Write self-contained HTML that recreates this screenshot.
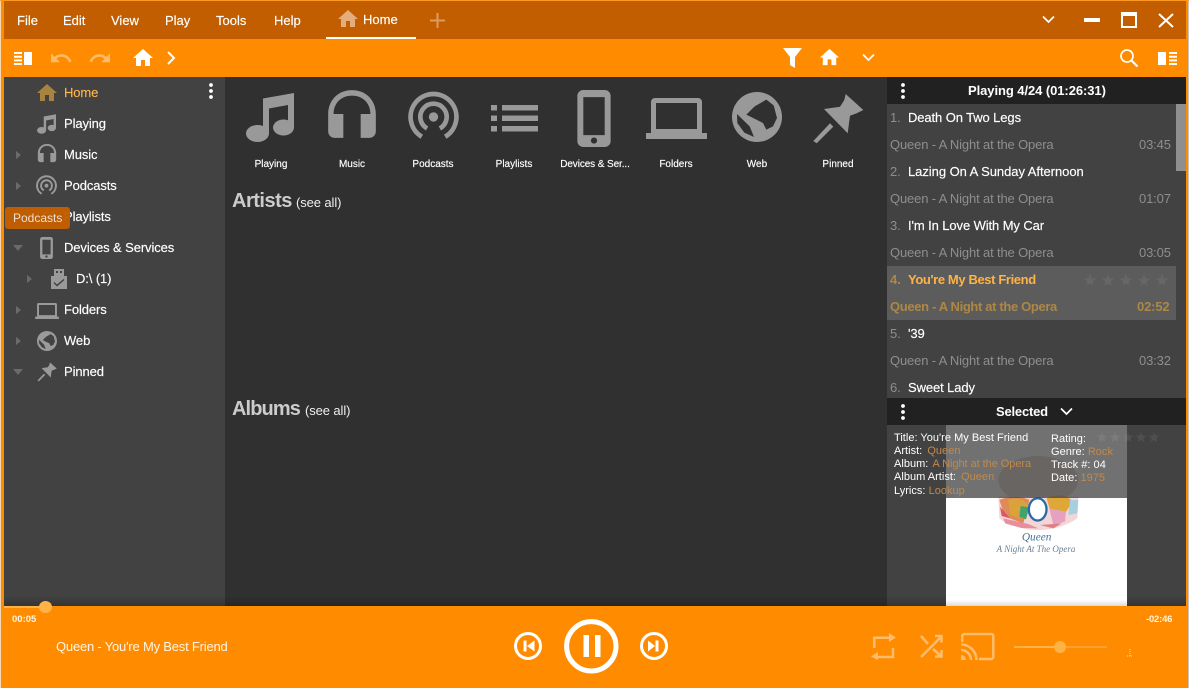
<!DOCTYPE html>
<html><head><meta charset="utf-8"><style>
html,body{margin:0;padding:0;width:1189px;height:688px;overflow:hidden;background:#ff8c00}
body{position:relative;font-family:"Liberation Sans",Arial,sans-serif;color:#fff}
.a{position:absolute}
.t{position:absolute;white-space:nowrap;line-height:16px}
.m{font-size:13px;top:13px;color:#fff;-webkit-text-stroke:.15px #fff}
.n{font-size:13px;color:#fff;letter-spacing:-.1px;-webkit-text-stroke:.15px currentColor}
.c{font-size:10px;color:#fff;text-align:center;width:76px;top:157px;-webkit-text-stroke:.15px #fff}
.q{font-size:13px;color:#fff;letter-spacing:-.1px;-webkit-text-stroke:.15px currentColor}
.g{font-size:13px;color:#8e8e8e;letter-spacing:-.15px}
.s{font-size:11px;color:#fff;line-height:13px;letter-spacing:.02px}
.s i{font-style:normal;color:#c08a4c;margin-left:2px}
.s i.z{margin-left:0}
svg{position:absolute;overflow:visible}
</style></head><body>
<svg width="0" height="0" style="position:absolute"><defs>
<symbol id="home" viewBox="0 0 24 24"><path d="M10 20v-6h4v6h5v-8h3L12 3 2 12h3v8z"/></symbol>
<symbol id="note" viewBox="0 0 48 49"><path d="M17 5.500L48 0V34H42V12L23 15.500V41H17z"/><ellipse cx="37.500" cy="34.500" rx="10.500" ry="8"/><ellipse cx="11.500" cy="40.500" rx="11.500" ry="8.500"/></symbol>
<symbol id="head" viewBox="0 0 24 24"><path d="M12 1C5.300 1 1 6 1 12v8c0 1.700 1.300 3 3 3h4V12H3.500C3.500 7 7 3.500 12 3.500S20.500 7 20.500 12H16v11h4c1.700 0 3-1.300 3-3v-8C23 6 18.700 1 12 1z"/></symbol>
<symbol id="pod" viewBox="0 -1.200 24 24"><circle cx="12" cy="11" r="2.200"/><path d="M6.500 20.300A10.800 10.800 0 1 1 17.500 20.300M9 16.400A6.200 6.200 0 1 1 15 16.400" fill="none" stroke="currentColor" stroke-width="2.200"/></symbol>
<symbol id="list" viewBox="0 0 47 27"><path d="M0 0h6v5.500H0zM11 0h36v5.500H11zM0 10.500h6V16H0zM11 10.500h36V16H11zM0 21h6v5.500H0zM11 21h36v5.500H11z"/></symbol>
<symbol id="phone" viewBox="0 0 14 24"><path fill-rule="evenodd" d="M2.500 0h9A2.500 2.500 0 0 1 14 2.500v19a2.500 2.500 0 0 1-2.500 2.500h-9A2.500 2.500 0 0 1 0 21.500v-19A2.500 2.500 0 0 1 2.500 0zM2.500 3v16h9V3zM7 20a1.300 1.300 0 1 0 0 2.600 1.300 1.300 0 0 0 0-2.600z"/></symbol>
<symbol id="lap" viewBox="0 0 61 41"><path fill-rule="evenodd" d="M9 0h43a4 4 0 0 1 4 4v31h5v6H0v-6h5V4a4 4 0 0 1 4-4zM10 5v26h41V5z"/></symbol>
<symbol id="web" viewBox="0 0 150 150"><path fill-rule="evenodd" d="M75 0a75 75 0 1 0 0 150a75 75 0 1 0 0-150zM103 23L68 43L43 68L73 83L93 93L103 113L123 103L135 78L125 40zM15 66L53 103L66 135L37 122L16 93z"/></symbol>
<symbol id="pin" viewBox="0 0 52 52"><path d="M33.700 1L51.300 17L44.700 20.300L38 22.700L35.700 40.300L12 16L28 13.700L32.300 7zM18 30.300L21.300 33.700L4.700 50.300L1.300 48z"/></symbol>
<symbol id="usb" viewBox="0 0 16 20"><path fill-rule="evenodd" d="M3 0h10v7h3v13H0V7h3zM5 2v2h2V2zM9 2v2h2V2zM3.500 13l-1 1 3.500 3.500L13.500 11l-1-1L6 15.500z"/></symbol>
<symbol id="star" viewBox="0 0 24 24"><path d="M12 2l3 7 7.500.6-5.700 5 1.700 7.400L12 18l-6.500 4 1.700-7.400-5.700-5L9 9z"/></symbol>
<symbol id="dots" viewBox="0 0 4 16"><circle cx="2" cy="2" r="1.900"/><circle cx="2" cy="8" r="1.900"/><circle cx="2" cy="14" r="1.900"/></symbol>
<symbol id="tri" viewBox="0 0 6 10"><path d="M0 0l6 5-6 5z"/></symbol>
<symbol id="undo" viewBox="2 7 21 9.500"><path d="M12.500 8c-2.650 0-5.050.99-6.900 2.600L2 7v9h9l-3.620-3.620c1.390-1.160 3.160-1.880 5.120-1.880 3.540 0 6.550 2.310 7.600 5.500l2.370-.78C21.080 11.030 17.150 8 12.500 8z"/></symbol>
</defs></svg>

<!-- frame -->
<div class="a" style="left:0;top:0;width:1189px;height:1px;background:#ff9a1f"></div>
<div class="a" style="left:0;top:1px;width:1px;height:687px;background:#f4d9b4"></div>
<div class="a" style="left:1188px;top:1px;width:1px;height:687px;background:#c9c4bc"></div>
<div class="a" style="left:4px;top:1px;width:1182px;height:38px;background:#c25e00"></div>
<div class="a" style="left:4px;top:77px;width:221px;height:529px;background:#424242"></div>
<div class="a" style="left:225px;top:77px;width:662px;height:529px;background:#303030"></div>
<div class="a" style="left:887px;top:77px;width:299px;height:529px;background:#424242"></div>
<div class="a" style="left:4px;top:596px;width:1182px;height:10px;background:linear-gradient(rgba(0,0,0,0),rgba(0,0,0,.22))"></div>

<!-- menu -->
<span class="t m" style="left:17px">File</span>
<span class="t m" style="left:63px">Edit</span>
<span class="t m" style="left:111px">View</span>
<span class="t m" style="left:165px">Play</span>
<span class="t m" style="left:216px">Tools</span>
<span class="t m" style="left:274px">Help</span>
<svg style="left:336px;top:7px;fill:#e3ad7c" width="24" height="24"><use href="#home"/></svg>
<span class="t m" style="left:363px;top:12px">Home</span>
<div class="a" style="left:326px;top:37px;width:90px;height:2px;background:#fff"></div>
<svg style="left:430px;top:13px" width="15" height="15"><path d="M7.500 0v15M0 7.500h15" stroke="#dd9b5e" stroke-width="2"/></svg>
<svg style="left:1042px;top:15px" width="13" height="10"><path d="M1 1.500l5.500 5.500L12 1.500" fill="none" stroke="#fff" stroke-width="1.700"/></svg>
<div class="a" style="left:1084px;top:18px;width:16px;height:4px;background:#fff"></div>
<div class="a" style="left:1121px;top:12px;width:12px;height:10px;border:2px solid #fff;border-top-width:4px"></div>
<svg style="left:1158px;top:13px" width="16" height="15"><path d="M1 1l14 13M15 1L1 14" stroke="#fff" stroke-width="2"/></svg>

<!-- toolbar -->
<svg style="left:14px;top:52px;fill:#fff" width="18" height="13"><path d="M0 0h8v2H0zM0 3.700h8v2H0zM0 7.400h8v2H0zM0 11h8v2H0zM10 0h8v13h-8z"/></svg>
<svg style="left:51px;top:53px;fill:#ffbc6b" width="21" height="10"><use href="#undo"/></svg>
<svg style="left:89px;top:53px;fill:#ffbc6b;transform:scaleX(-1)" width="21" height="10"><use href="#undo"/></svg>
<svg style="left:131px;top:46px;fill:#fff" width="24" height="24"><use href="#home"/></svg>
<svg style="left:166px;top:51px" width="10" height="14"><path d="M2 1l6 6-6 6" fill="none" stroke="#fff" stroke-width="2"/></svg>
<svg style="left:783px;top:48px;fill:#fff" width="19" height="20"><path d="M0 0h19l-7 9v11l-5-3V9z"/></svg>
<svg style="left:818px;top:46px;fill:#fff" width="23" height="23"><use href="#home"/></svg>
<svg style="left:862px;top:53px" width="13" height="10"><path d="M1 1.500l5.500 5.500L12 1.500" fill="none" stroke="#fff" stroke-width="1.700"/></svg>
<svg style="left:1120px;top:49px" width="19" height="18"><circle cx="7" cy="7" r="6" fill="none" stroke="#fff" stroke-width="1.700"/><path d="M11.500 11.500l6 6" stroke="#fff" stroke-width="2.200"/></svg>
<svg style="left:1158px;top:52px;fill:#fff" width="19" height="13"><path d="M0 0h8v13H0zM11 0h8v2h-8zM11 3.700h8v2h-8zM11 7.400h8v2h-8zM11 11h8v2h-8z"/></svg>

<!-- sidebar -->
<svg style="left:35px;top:81px;fill:#a8823f" width="24" height="24"><use href="#home"/></svg>
<span class="t n" style="left:64px;top:85px;color:#ffb347">Home</span>
<svg style="left:209px;top:83px;fill:#fff" width="4" height="16"><use href="#dots"/></svg>
<svg style="left:37px;top:114px;fill:#9a9a9a" width="19" height="20"><use href="#note"/></svg>
<span class="t n" style="left:64px;top:116px">Playing</span>
<svg style="left:16px;top:150px;fill:#6a6a6a" width="5" height="10"><use href="#tri"/></svg>
<svg style="left:37px;top:143px;fill:#9a9a9a" width="20" height="20"><use href="#head"/></svg>
<span class="t n" style="left:64px;top:147px">Music</span>
<svg style="left:16px;top:181px;fill:#6a6a6a" width="5" height="10"><use href="#tri"/></svg>
<svg style="left:36px;top:175px;fill:#9a9a9a;color:#9a9a9a" width="21" height="21"><use href="#pod"/></svg>
<span class="t n" style="left:64px;top:178px">Podcasts</span>
<svg style="left:37px;top:211px;fill:#9a9a9a" width="20" height="12"><use href="#list"/></svg>
<span class="t n" style="left:64px;top:209px">Playlists</span>
<svg style="left:13px;top:245px;fill:#6a6a6a" width="10" height="6"><path d="M0 0h10L5 6z"/></svg>
<svg style="left:40px;top:237px;fill:#9a9a9a" width="13" height="22"><use href="#phone"/></svg>
<span class="t n" style="left:64px;top:240px">Devices &amp; Services</span>
<svg style="left:27px;top:274px;fill:#6a6a6a" width="5" height="10"><use href="#tri"/></svg>
<svg style="left:51px;top:269px;fill:#9a9a9a" width="16" height="20"><use href="#usb"/></svg>
<span class="t n" style="left:76px;top:271px">D:\ (1)</span>
<svg style="left:16px;top:305px;fill:#6a6a6a" width="5" height="10"><use href="#tri"/></svg>
<svg style="left:35px;top:303px;fill:#9a9a9a" width="24" height="16"><use href="#lap"/></svg>
<span class="t n" style="left:64px;top:302px">Folders</span>
<svg style="left:16px;top:336px;fill:#6a6a6a" width="5" height="10"><use href="#tri"/></svg>
<svg style="left:37px;top:331px;fill:#9a9a9a" width="20" height="20"><use href="#web"/></svg>
<span class="t n" style="left:64px;top:333px">Web</span>
<svg style="left:13px;top:369px;fill:#6a6a6a" width="10" height="6"><path d="M0 0h10L5 6z"/></svg>
<svg style="left:37px;top:362px;fill:#9a9a9a" width="20" height="20"><use href="#pin"/></svg>
<span class="t n" style="left:64px;top:364px">Pinned</span>
<div class="a" style="left:5px;top:207px;width:65px;height:22px;background:#c25e00;border-radius:3px;opacity:.97"></div>
<span class="t" style="left:13px;top:210px;font-size:12px;color:#f0e0d0">Podcasts</span>

<!-- collection -->
<svg style="left:246px;top:93px;fill:#999" width="48" height="49"><use href="#note"/></svg>
<svg style="left:326px;top:88px;fill:#999" width="52" height="52"><use href="#head"/></svg>
<svg style="left:408px;top:91px;fill:#999;color:#999" width="51" height="51"><use href="#pod"/></svg>
<svg style="left:491px;top:105px;fill:#999" width="47" height="27"><use href="#list"/></svg>
<svg style="left:577px;top:90px;fill:#999" width="34" height="57"><use href="#phone"/></svg>
<svg style="left:646px;top:98px;fill:#999" width="61" height="41"><use href="#lap"/></svg>
<svg style="left:732px;top:92px;fill:#999" width="50" height="50"><use href="#web"/></svg>
<svg style="left:812px;top:93px;fill:#999" width="52" height="52"><use href="#pin"/></svg>
<span class="t c" style="left:233px">Playing</span>
<span class="t c" style="left:314px">Music</span>
<span class="t c" style="left:395px">Podcasts</span>
<span class="t c" style="left:476px">Playlists</span>
<span class="t c" style="left:557px;letter-spacing:-.1px">Devices &amp; Ser...</span>
<span class="t c" style="left:638px">Folders</span>
<span class="t c" style="left:719px">Web</span>
<span class="t c" style="left:800px">Pinned</span>
<span class="t" style="left:232px;top:190px;font-size:20px;line-height:22px;font-weight:bold;color:#ccc;letter-spacing:-.5px">Artists</span>
<span class="t" style="left:296px;top:195px;font-size:13px;color:#eee;letter-spacing:-.1px">(see all)</span>
<span class="t" style="left:232px;top:398px;font-size:20px;line-height:22px;font-weight:bold;color:#ccc;letter-spacing:-.9px">Albums</span>
<span class="t" style="left:305px;top:403px;font-size:13px;color:#eee;letter-spacing:-.1px">(see all)</span>

<!-- playing list -->
<div class="a" style="left:887px;top:77px;width:299px;height:27px;background:#212121"></div>
<svg style="left:901px;top:83px;fill:#fff" width="4" height="16"><use href="#dots"/></svg>
<span class="t" style="left:968px;top:83px;font-size:13px;font-weight:bold;letter-spacing:-.07px">Playing 4/24 (01:26:31)</span>
<div class="a" style="left:1176px;top:104px;width:10px;height:67px;background:#8f8f8f"></div>
<div class="a" style="left:887px;top:266px;width:289px;height:54px;background:#5c5c5c"></div>

<span class="t g" style="left:890px;top:110px">1.</span><span class="t q" style="left:908px;top:110px">Death On Two Legs</span>
<span class="t g" style="left:890px;top:137px">Queen - A Night at the Opera</span><span class="t g" style="left:1139px;top:137px">03:45</span>
<span class="t g" style="left:890px;top:164px">2.</span><span class="t q" style="left:908px;top:164px;letter-spacing:-.05px">Lazing On A Sunday Afternoon</span>
<span class="t g" style="left:890px;top:191px">Queen - A Night at the Opera</span><span class="t g" style="left:1139px;top:191px">01:07</span>
<span class="t g" style="left:890px;top:218px">3.</span><span class="t q" style="left:908px;top:218px">I'm In Love With My Car</span>
<span class="t g" style="left:890px;top:245px">Queen - A Night at the Opera</span><span class="t g" style="left:1139px;top:245px">03:05</span>
<span class="t g" style="left:890px;top:272px;color:#ad8845;font-weight:bold">4.</span><span class="t" style="left:908px;top:272px;font-size:13px;color:#ffb347;font-weight:bold;letter-spacing:-.38px">You're My Best Friend</span>
<svg style="left:1083px;top:273px;fill:#666" width="14" height="14"><use href="#star"/></svg>
<svg style="left:1101px;top:273px;fill:#666" width="14" height="14"><use href="#star"/></svg>
<svg style="left:1119px;top:273px;fill:#666" width="14" height="14"><use href="#star"/></svg>
<svg style="left:1137px;top:273px;fill:#666" width="14" height="14"><use href="#star"/></svg>
<svg style="left:1155px;top:273px;fill:#666" width="14" height="14"><use href="#star"/></svg>
<span class="t g" style="left:890px;top:299px;color:#ad8845;font-weight:bold;letter-spacing:-.35px">Queen - A Night at the Opera</span><span class="t g" style="left:1137px;top:299px;color:#ad8845;font-weight:bold">02:52</span>
<span class="t g" style="left:890px;top:326px">5.</span><span class="t q" style="left:908px;top:326px">'39</span>
<span class="t g" style="left:890px;top:353px">Queen - A Night at the Opera</span><span class="t g" style="left:1139px;top:353px">03:32</span>
<span class="t g" style="left:890px;top:380px">6.</span><span class="t q" style="left:908px;top:380px">Sweet Lady</span>

<!-- selected -->
<div class="a" style="left:887px;top:398px;width:299px;height:27px;background:#212121"></div>
<svg style="left:901px;top:404px;fill:#fff" width="4" height="16"><use href="#dots"/></svg>
<span class="t" style="left:996px;top:404px;font-size:13px;font-weight:bold;letter-spacing:-.2px">Selected</span>
<svg style="left:1060px;top:407px" width="13" height="10"><path d="M1 1.500l5.500 5.500L12 1.500" fill="none" stroke="#fff" stroke-width="1.700"/></svg>

<!-- album -->
<div class="a" style="left:946px;top:425px;width:181px;height:181px;background:#fff"></div>
<svg style="left:990px;top:450px" width="95" height="110" viewBox="0 0 285 330">
<ellipse cx="145" cy="90" rx="120" ry="72" fill="#dccfc7"/>
<path d="M25 140H265L262 205C225 230 180 240 145 240S60 230 28 205z" fill="#f3d6d6"/>
<path d="M28 150C60 135 100 140 118 150L100 220L45 200z" fill="#e08a5a"/>
<path d="M55 150C75 140 100 145 115 165L90 205L60 195z" fill="#d9a23a"/>
<path d="M30 170L60 205L35 198z" fill="#d9566b"/>
<path d="M92 168L118 172L108 208L88 200z" fill="#3fa56b"/>
<path d="M40 205L115 222L145 235L95 234L45 220z" fill="#e78f9c"/>
<path d="M170 145C195 130 235 135 248 155L225 190L180 180z" fill="#dfa638"/>
<path d="M178 175L228 185L225 215L190 225z" fill="#e7a1c0"/>
<path d="M240 150L265 150L262 190L235 195z" fill="#a7cfe0"/>
<path d="M150 225L215 220L240 205L190 235z" fill="#df7f86"/>
<ellipse cx="143" cy="178" rx="30" ry="37" fill="#2a6aa8"/>
<ellipse cx="143" cy="178" rx="23" ry="30" fill="#fff"/>
<text x="140" y="272" text-anchor="middle" font-family="Liberation Serif,serif" font-style="italic" font-size="34" fill="#47709a">Queen</text>
<text x="138" y="306" text-anchor="middle" font-family="Liberation Serif,serif" font-style="italic" font-size="27" fill="#6c7f93">A Night At The Opera</text>
</svg>
<div class="a" style="left:946px;top:425px;width:181px;height:73px;background:rgba(66,66,66,.75)"></div>
<div class="a" style="left:946px;top:600px;width:181px;height:6px;background:linear-gradient(rgba(0,0,0,0),rgba(0,0,0,.14))"></div>

<span class="t s" style="left:894px;top:432px">Title: You're My Best Friend</span>
<span class="t s" style="left:894px;top:445px">Artist: <i>Queen</i></span>
<span class="t s" style="left:894px;top:458px">Album: <i class="z" style="margin-left:1px;letter-spacing:-.05px">A Night at the Opera</i></span>
<span class="t s" style="left:894px;top:471px">Album Artist: <i>Queen</i></span>
<span class="t s" style="left:894px;top:485px">Lyrics: <i class="z">Lookup</i></span>
<span class="t s" style="left:1051px;top:433px">Rating:</span>
<span class="t s" style="left:1051px;top:446px">Genre: <i class="z">Rock</i></span>
<span class="t s" style="left:1051px;top:459px">Track #: 04</span>
<span class="t s" style="left:1051px;top:472px">Date: <i class="z">1975</i></span>
<svg style="left:1096px;top:431px;fill:rgba(255,255,255,.07)" width="12" height="12"><use href="#star"/></svg>
<svg style="left:1109px;top:431px;fill:rgba(255,255,255,.07)" width="12" height="12"><use href="#star"/></svg>
<svg style="left:1122px;top:431px;fill:rgba(255,255,255,.07)" width="12" height="12"><use href="#star"/></svg>
<svg style="left:1135px;top:431px;fill:rgba(255,255,255,.07)" width="12" height="12"><use href="#star"/></svg>
<svg style="left:1148px;top:431px;fill:rgba(255,255,255,.07)" width="12" height="12"><use href="#star"/></svg>

<!-- player -->
<div class="a" style="left:4px;top:606px;width:41px;height:2px;background:#ffb347"></div>
<div class="a" style="left:39px;top:601px;width:13px;height:12px;border-radius:50%;background:#ffb347"></div>
<span class="t" style="left:12px;top:612px;font-size:9.500px;font-weight:bold;color:#fff5e5">00:05</span>
<span class="t" style="left:1146px;top:612px;font-size:9.500px;font-weight:bold;color:#fff5e5;letter-spacing:-.2px">-02:46</span>
<span class="t" style="left:56px;top:639px;font-size:13px;color:#fff4e2;letter-spacing:-.2px">Queen - You're My Best Friend</span>

<svg style="left:514px;top:632px" width="28" height="28"><circle cx="14" cy="14" r="12.500" fill="none" stroke="#fff" stroke-width="3"/><path d="M9.500 8.500h3v11h-3zM20.500 8.500v11L13 14z" fill="#fff"/></svg>
<svg style="left:564px;top:619px" width="55" height="55"><circle cx="27.300" cy="27.300" r="24.700" fill="none" stroke="#fff" stroke-width="5"/><path d="M19.500 16H25V38H19.500zM31 16H36.500V38H31z" fill="#fff"/></svg>
<svg style="left:640px;top:632px" width="28" height="28"><circle cx="14" cy="14" r="12.500" fill="none" stroke="#fff" stroke-width="3"/><path d="M15.500 8.500h3v11h-3zM8 8.500v11L15 14z" fill="#fff"/></svg>

<svg style="left:871px;top:633px" width="26" height="28"><path d="M3.300 15V4.700H18M22 15V24H7" fill="none" stroke="#ffbc6b" stroke-width="2.500"/><path d="M18 0l7 4.500-7 4.500zM7 19L0 23.500 7 27z" fill="#ffbc6b"/></svg>
<svg style="left:920px;top:635px" width="23" height="23" fill="none" stroke="#ffbc6b" stroke-width="2.500"><path d="M1 1l7 8M13 14l8 7M1 22L21 2M15 1h6.500v6.500M21.500 15v6.500H15"/></svg>
<svg style="left:961px;top:633px" width="34" height="27" fill="none" stroke="#ffbc6b" stroke-width="2.500"><path d="M1.300 9V3a2 2 0 0 1 2-2h27a2 2 0 0 1 2 2v21a2 2 0 0 1-2 2H18"/><path d="M0 11.500A15.500 15.500 0 0 1 15.500 27M0 17A10 10 0 0 1 10 27"/><path d="M0 22a5 5 0 0 1 5 5H0z" fill="#ffbc6b" stroke="none"/></svg>
<div class="a" style="left:1014px;top:646px;width:46px;height:2px;background:#ffb347"></div>
<div class="a" style="left:1060px;top:646px;width:47px;height:2px;background:#ffa030"></div>
<div class="a" style="left:1054px;top:641px;width:12px;height:12px;border-radius:50%;background:#ffb347"></div>
<svg style="left:1126px;top:649px" width="8" height="8"><path d="M4 0v7M1 7h6" stroke="#ffe48a" stroke-width="1" stroke-dasharray="1 1"/></svg>
</body></html>
